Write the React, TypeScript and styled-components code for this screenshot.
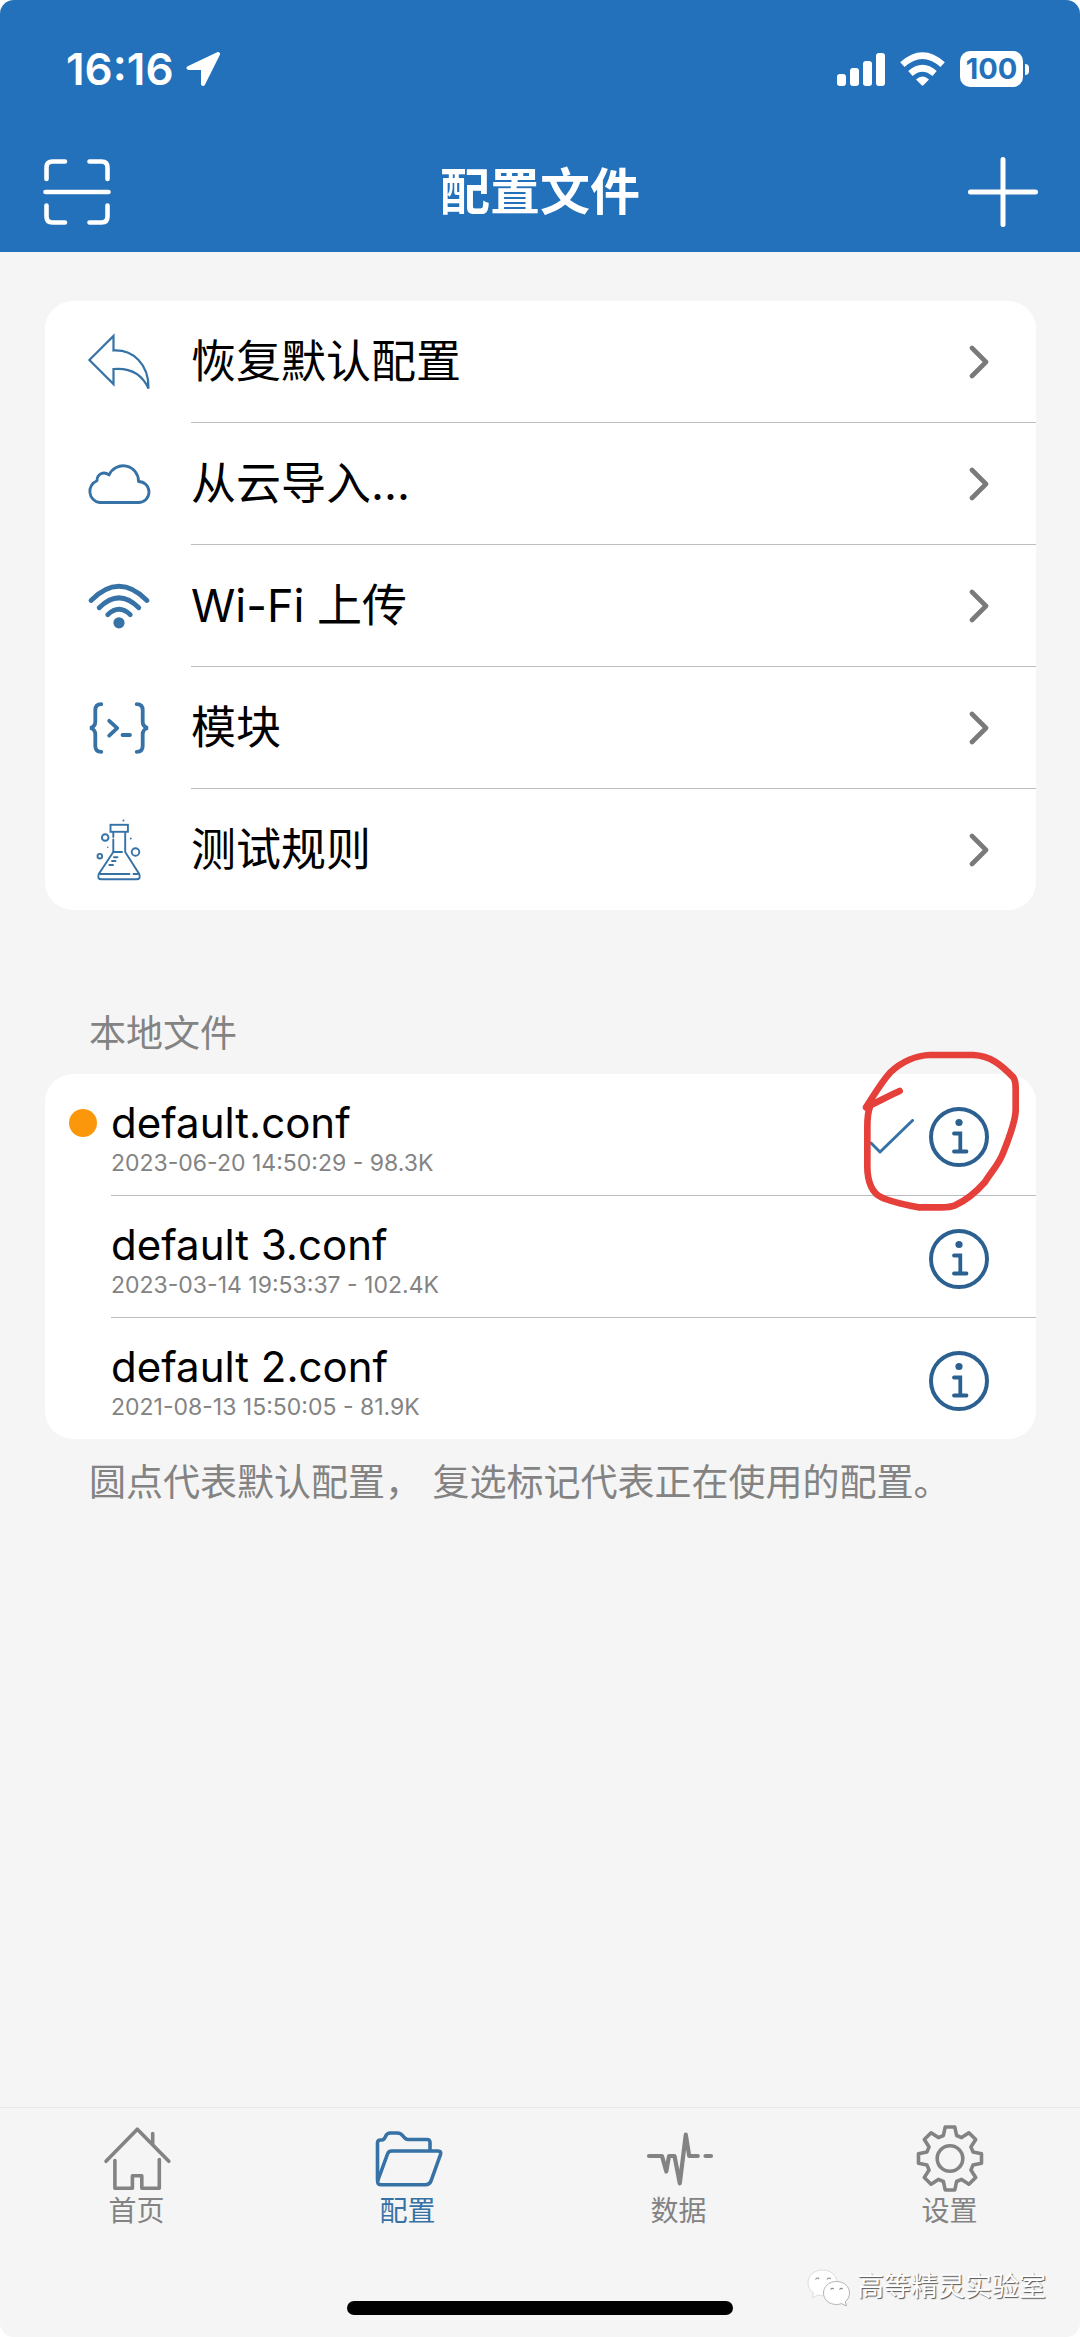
import React from "react";
import styled, { createGlobalStyle } from "styled-components";

const color = {
  brand: "#2371bb",
  icon: "#3672a6",
  info: "#2b6090",
  page: "#f5f5f5",
  card: "#ffffff",
  line: "#bbbdbf",
  muted: "#838383",
  chevron: "#7a7a7a",
  dot: "#fb970b",
  pen: "#e6403b",
};

const GlobalStyle = createGlobalStyle`
  *, *::before, *::after { box-sizing: border-box; }
  body {
    margin: 0;
    background: #ffffff;
    font-family: Inter, "Noto Sans CJK SC", sans-serif;
    color: #000000;
  }
  h1, h2, p, ul { margin: 0; padding: 0; }
  ul { list-style: none; }
  button { font: inherit; color: inherit; background: none; border: 0; padding: 0; cursor: pointer; }
  svg { display: block; flex: none; }
`;

const Screen = styled.div`
  position: relative;
  display: flex;
  flex-direction: column;
  min-height: 100vh;
  background: ${color.page};
  border-radius: 14px;
  overflow: hidden;
`;

const Header = styled.header`
  background: ${color.brand};
  color: #ffffff;
`;

const StatusBar = styled.div`
  display: flex;
  align-items: center;
  justify-content: space-between;
  height: 132px;
  padding: 6px 51px 0 66px;
`;

const StatusGroup = styled.div<{ $gap: number }>`
  display: flex;
  align-items: center;
  gap: ${(p) => p.$gap}px;
`;

const Clock = styled.time`
  font-size: 44px;
  line-height: 52px;
  font-weight: 600;
`;

const Battery = styled.div`
  display: flex;
  align-items: center;
  gap: 2px;
`;

const BatteryBody = styled.span`
  display: grid;
  place-items: center;
  width: 63px;
  height: 36px;
  border-radius: 10px;
  background: #ffffff;
  color: ${color.brand};
  font-size: 29px;
  line-height: 36px;
  font-weight: 700;
`;

const BatteryTip = styled.span`
  width: 4px;
  height: 11px;
  border-radius: 0 5px 5px 0;
  background: #ffffff;
`;

const TitleBar = styled.div`
  display: grid;
  grid-template-columns: 72px 1fr 72px;
  align-items: center;
  height: 120px;
  padding: 0 41px;
`;

const Title = styled.h1`
  font-size: 50px;
  line-height: 60px;
  font-weight: 600;
  text-align: center;
`;

const Content = styled.main`
  flex: 1;
  padding: 49px 44px 48px 45px;
`;

const Card = styled.ul`
  position: relative;
  background: ${color.card};
  border-radius: 28px;
`;

const Divider = styled.li<{ $inset: number }>`
  height: 1px;
  margin-left: ${(p) => p.$inset}px;
  background: ${color.line};
`;

const MenuButton = styled.button`
  display: flex;
  align-items: center;
  width: 100%;
  height: 121px;
  padding: 0 47px 0 42px;
  text-align: left;
`;

const MenuLabel = styled.span`
  flex: 1;
  margin-left: 40px;
  font-size: 45px;
  line-height: 56px;
`;

const SectionTitle = styled.h2`
  margin: 100px 0 16px 44px;
  color: ${color.muted};
  font-size: 37px;
  line-height: 48px;
  font-weight: 400;
`;

const SectionNote = styled.p`
  margin: 20px 0 0 44px;
  color: ${color.muted};
  font-size: 37px;
  line-height: 48px;
`;

const FileRow = styled.li`
  display: flex;
  align-items: center;
  gap: 15px;
  height: 121px;
  padding: 4px 47px 0 24px;
`;

const FileText = styled.div`
  flex: 1;
  display: grid;
  grid-template-columns: 28px 1fr;
  grid-template-rows: 52px 28px;
  column-gap: 14px;
  align-items: center;
`;

const DefaultDot = styled.span<{ $on: boolean }>`
  width: 28px;
  height: 28px;
  border-radius: 50%;
  background: ${(p) => (p.$on ? color.dot : "transparent")};
`;

const FileName = styled.span`
  font-size: 42px;
  line-height: 52px;
`;

const FileMeta = styled.span`
  grid-column: 2;
  color: ${color.muted};
  font-size: 23px;
  line-height: 28px;
`;

const PenMark = styled.svg`
  position: absolute;
  top: -34px;
  right: 11px;
  pointer-events: none;
`;

const Footer = styled.footer`
  border-top: 1px solid #e9e9e9;
`;

const Tabs = styled.nav`
  display: grid;
  grid-template-columns: repeat(4, 1fr);
  gap: 16px;
  padding: 14px 3px 0 9px;
`;

const Tab = styled.button<{ $active: boolean }>`
  display: flex;
  flex-direction: column;
  align-items: center;
  color: ${(p) => (p.$active ? color.icon : color.muted)};
  font-size: 28px;
  line-height: 34px;
`;

const HomeIndicator = styled.div`
  width: 386px;
  height: 14px;
  margin: 73px auto 22px;
  border-radius: 7px;
  background: #000000;
`;

const Watermark = styled.div`
  position: absolute;
  right: 34px;
  bottom: 29px;
  display: flex;
  align-items: center;
  gap: 4px;
  color: #ffffff;
  font-size: 27px;
  line-height: 36px;
  text-shadow: 1px 1px 1px #555555;
`;

/* ---------- status and title icons ---------- */

const LocationIcon = () => (
  <svg width="34" height="34" viewBox="0 0 34 34" fill="#fff" stroke="#fff" strokeWidth="4" strokeLinejoin="round">
    <path d="M32 2 L2.5 16 H17 V32 Z" />
  </svg>
);

const SignalIcon = () => (
  <svg width="48" height="33" viewBox="0 0 48 33" fill="#fff">
    <rect x="0" y="21" width="9" height="12" rx="3" />
    <rect x="13" y="15" width="9" height="18" rx="3" />
    <rect x="26" y="8" width="9" height="25" rx="3" />
    <rect x="39" y="0" width="9" height="33" rx="3" />
  </svg>
);

const StatusWifiIcon = () => (
  <svg width="45" height="34" viewBox="0 0 45 34" fill="none" stroke="#fff" strokeWidth="6.6">
    <path d="M2.4 12.6 Q22.5 -5.4 42.6 12.6" />
    <path d="M10.4 21.4 Q22.5 11 34.6 21.4" />
    <path d="M16 27.4 Q22.5 21.4 29 27.4 L23.6 33 Q22.5 34 21.4 33 Z" fill="#fff" stroke="none" />
  </svg>
);

const ScanIcon = () => (
  <svg width="72" height="72" viewBox="0 0 72 72" fill="none" stroke="#fff" strokeWidth="4.6" strokeLinecap="round">
    <path d="M5.5 23 V11.5 Q5.5 5.5 11.5 5.5 H24" />
    <path d="M48.5 5.5 H60.5 Q66.5 5.5 66.5 11.5 V23" />
    <path d="M5.5 49.5 V60.5 Q5.5 66.5 11.5 66.5 H24" />
    <path d="M48.5 66.5 H60.5 Q66.5 66.5 66.5 60.5 V49.5" />
    <path d="M4.5 36 H67.5" />
  </svg>
);

const PlusIcon = () => (
  <svg width="72" height="72" viewBox="0 0 72 72" fill="none" stroke="#fff" strokeWidth="5" strokeLinecap="round">
    <path d="M36 3.5 V68.5 M3.5 36 H68.5" />
  </svg>
);

/* ---------- menu icons ---------- */

const MenuSvg = ({ width, children }: { width: number; children: React.ReactNode }) => (
  <svg
    width="64"
    height="64"
    viewBox="0 0 64 64"
    fill="none"
    stroke={color.icon}
    strokeWidth={width}
    strokeLinecap="round"
  >
    {children}
  </svg>
);

const RestoreIcon = () => (
  <MenuSvg width={2.2}>
    <path
      strokeLinejoin="miter"
      d="M2.4 30 L26.5 6 V20.5 C46 19.5 62 34 61.5 58.5 C55 44 44 37.5 26.5 39 V54 Z"
    />
  </MenuSvg>
);

const CloudIcon = () => (
  <MenuSvg width={2.8}>
    <path
      strokeLinejoin="round"
      d="M12.5 50.5 A11.3 11.3 0 0 1 10 28.8 C10 22.5 16.5 18.5 22 23 A15.4 15.4 0 0 1 51.5 29.5 A10.5 10.5 0 0 1 51.5 50.5 Z"
    />
  </MenuSvg>
);

const WifiIcon = () => (
  <MenuSvg width={4.8}>
    <path d="M4 26.5 Q32 -2 60 26.5" />
    <path d="M12.2 33.8 Q32 14 51.8 33.8" />
    <path d="M20.7 40.7 Q32 30 43.3 40.7" />
    <circle cx="32" cy="48.8" r="5.6" fill={color.icon} stroke="none" />
  </MenuSvg>
);

const ModuleIcon = () => (
  <MenuSvg width={3.8}>
    <path d="M14.3 8.2 C10 8.2 8.3 10 8.3 14 V25.5 C8.3 29.5 6.5 31.2 3.2 32 C6.5 32.8 8.3 34.5 8.3 38.5 V50 C8.3 54 10 55.8 14.3 55.8" />
    <path d="M49.7 8.2 C54 8.2 55.7 10 55.7 14 V25.5 C55.7 29.5 57.5 31.2 60.8 32 C57.5 32.8 55.7 34.5 55.7 38.5 V50 C55.7 54 54 55.8 49.7 55.8" />
    <path d="M22.2 24.8 L30.2 32.2 L22.2 39.6" strokeLinejoin="round" />
    <path d="M35.5 39 H43" />
  </MenuSvg>
);

const FlaskIcon = () => (
  <MenuSvg width={1.9}>
    <rect x="23.5" y="6.8" width="17.4" height="7" />
    <path d="M26.3 14 V19 M26.3 21.5 V34 L11.8 56 Q9.8 61.3 14.5 61.3 H49.5 Q54.2 61.3 52.2 56 L38.2 34 V14" />
    <path d="M26.3 34 H35" />
    <path d="M13 56 H42.5 M46.5 56 H51" />
    <path d="M27 39.2 H30.5 M25 43 H28.5 M22.3 47 H26" />
    <circle cx="18.2" cy="19.5" r="3.3" />
    <circle cx="48.5" cy="34" r="3.8" />
    <circle cx="12.8" cy="38.2" r="2.3" />
    <g fill={color.icon} stroke="none">
      <circle cx="36.5" cy="2.4" r="1" />
      <circle cx="43.8" cy="20.5" r="0.9" />
      <circle cx="20.8" cy="29.3" r="0.8" />
    </g>
  </MenuSvg>
);

const ChevronIcon = () => (
  <svg
    width="20"
    height="34"
    viewBox="0 0 20 34"
    fill="none"
    stroke={color.chevron}
    strokeWidth="4.6"
    strokeLinecap="round"
    strokeLinejoin="round"
  >
    <path d="M3 3 L17 17 L3 31" />
  </svg>
);

/* ---------- file list icons ---------- */

const InfoIcon = () => (
  <svg width="60" height="60" viewBox="0 0 60 60" fill="none" stroke={color.info} strokeLinecap="round">
    <circle cx="30" cy="30" r="28" strokeWidth="4" />
    <circle cx="30" cy="15.5" r="3.6" fill={color.info} stroke="none" />
    <path d="M25 26.5 H31.3 V44.5 M25 44.5 H37.5" strokeWidth="3.8" />
  </svg>
);

const CheckIcon = () => (
  <svg
    width="44"
    height="36"
    viewBox="0 0 44 36"
    fill="none"
    stroke={color.icon}
    strokeWidth="3"
    strokeLinecap="round"
    strokeLinejoin="round"
  >
    <path d="M1 24 L10 33 L42.5 1.5" />
  </svg>
);

/* ---------- tab icons ---------- */

const TabSvg = ({ children }: { children: React.ReactNode }) => (
  <svg
    width="72"
    height="72"
    viewBox="0 0 72 72"
    fill="none"
    stroke="currentColor"
    strokeWidth="3.6"
    strokeLinecap="round"
    strokeLinejoin="round"
  >
    {children}
  </svg>
);

const HouseIcon = () => (
  <TabSvg>
    <path d="M5 39.3 L36.3 7.2 L67.8 39.3" />
    <path d="M51.7 11.5 V22" />
    <path d="M13.9 38.5 V66.3 H31.4 V53.7 H40.8 V66.3 H58.3 V37.5" />
  </TabSvg>
);

const FolderIcon = () => (
  <TabSvg>
    <path d="M5.5 58.5 V21 Q5.5 18 8.5 18 H10 Q12.5 17.5 13.5 14.5 Q15 11 18 11 H25 Q29 11 31 14 Q33.5 17.5 36 17.5 H55 Q58 17.5 58 20.5 V28.5" />
    <path d="M19.5 29 H66 Q69.5 29 68.5 32.5 L59 59 Q57.5 62.7 53.5 62.7 H9 Q4.5 62.7 6 58 L15.5 32 Q16.5 29 19.5 29 Z" />
  </TabSvg>
);

const PulseIcon = () => (
  <TabSvg>
    <path
      strokeWidth="4.2"
      d="M6 34 H19 L23.3 49.5 L26 34 H31.5 L36.8 61.3 L42.8 12.5 L46.2 34 H54.8 M62.5 34 H68"
    />
  </TabSvg>
);

const tooth: [number, number][] = [
  [-6.6, -23],
  [-4.8, -31.5],
  [4.8, -31.5],
  [6.6, -23],
];

const gearPath =
  Array.from({ length: 8 })
    .flatMap((_, k) => {
      const a = (k * Math.PI) / 4;
      return tooth.map(([x, y]) => {
        const px = 36 + x * Math.cos(a) - y * Math.sin(a);
        const py = 36.5 + x * Math.sin(a) + y * Math.cos(a);
        return `${px.toFixed(1)} ${py.toFixed(1)}`;
      });
    })
    .map((pt, i) => `${i === 0 ? "M" : "L"}${pt}`)
    .join(" ") + " Z";

const GearIcon = () => (
  <TabSvg>
    <path d={gearPath} />
    <circle cx="36" cy="36.5" r="12.8" />
  </TabSvg>
);

const ChatBubblesIcon = () => (
  <svg width="48" height="42" viewBox="0 0 48 42" fill="#fff" stroke="#b4b4b4" strokeWidth="1">
    <path
      d="M17.5 4 C9 4 3 9.7 3 17 C3 21 5 24.5 8.5 27 L7.5 32 L13 29 C14.5 29.5 16 29.7 17.5 29.7 C26 29.7 32 24 32 17 C32 9.7 26 4 17.5 4 Z"
      stroke="#dcdcdc"
    />
    <path d="M31.5 15.5 C24 15.5 18.5 20.5 18.5 27 C18.5 33.5 24 38.5 31.5 38.5 C33.2 38.5 35 38.2 36.5 37.6 L41.5 40 L40.3 35.7 C43 33.6 44.5 30.5 44.5 27 C44.5 20.5 39 15.5 31.5 15.5 Z" />
    <g fill="none" stroke="#8a8a8a" strokeWidth="1.2">
      <path d="M10.5 13.5 Q12.3 10.8 14.2 13 M22 13.5 Q23.8 10.8 25.7 13" />
      <path d="M25.5 23.5 Q27 21.5 28.7 23 M34.5 23.5 Q36 21.5 37.7 23" />
    </g>
  </svg>
);

/* ---------- data ---------- */

const menu = [
  { label: "恢复默认配置", Icon: RestoreIcon },
  { label: "从云导入...", Icon: CloudIcon },
  { label: "Wi-Fi 上传", Icon: WifiIcon },
  { label: "模块", Icon: ModuleIcon },
  { label: "测试规则", Icon: FlaskIcon },
];

const files = [
  { name: "default.conf", meta: "2023-06-20 14:50:29 - 98.3K", isDefault: true, inUse: true },
  { name: "default 3.conf", meta: "2023-03-14 19:53:37 - 102.4K", isDefault: false, inUse: false },
  { name: "default 2.conf", meta: "2021-08-13 15:50:05 - 81.9K", isDefault: false, inUse: false },
];

const tabs = [
  { label: "首页", Icon: HouseIcon, active: false },
  { label: "配置", Icon: FolderIcon, active: true },
  { label: "数据", Icon: PulseIcon, active: false },
  { label: "设置", Icon: GearIcon, active: false },
];

export default function App() {
  return (
    <>
      <GlobalStyle />
      <Screen lang="zh-CN">
        <Header>
          <StatusBar>
            <StatusGroup $gap={12}>
              <Clock>16:16</Clock>
              <LocationIcon />
            </StatusGroup>
            <StatusGroup $gap={15}>
              <SignalIcon />
              <StatusWifiIcon />
              <Battery>
                <BatteryBody>100</BatteryBody>
                <BatteryTip />
              </Battery>
            </StatusGroup>
          </StatusBar>
          <TitleBar>
            <button type="button" aria-label="扫描">
              <ScanIcon />
            </button>
            <Title>配置文件</Title>
            <button type="button" aria-label="添加">
              <PlusIcon />
            </button>
          </TitleBar>
        </Header>

        <Content>
          <Card>
            {menu.map(({ label, Icon }, i) => (
              <React.Fragment key={label}>
                {i > 0 && <Divider role="separator" $inset={146} />}
                <li>
                  <MenuButton type="button">
                    <Icon />
                    <MenuLabel>{label}</MenuLabel>
                    <ChevronIcon />
                  </MenuButton>
                </li>
              </React.Fragment>
            ))}
          </Card>

          <SectionTitle>本地文件</SectionTitle>
          <Card>
            {files.map((file, i) => (
              <React.Fragment key={file.name}>
                {i > 0 && <Divider role="separator" $inset={66} />}
                <FileRow>
                  <FileText>
                    <DefaultDot $on={file.isDefault} />
                    <FileName>{file.name}</FileName>
                    <FileMeta>{file.meta}</FileMeta>
                  </FileText>
                  {file.inUse && <CheckIcon />}
                  <button type="button" aria-label={`${file.name} 详情`}>
                    <InfoIcon />
                  </button>
                </FileRow>
              </React.Fragment>
            ))}
            <PenMark
              width="170"
              height="176"
              viewBox="45 30 510 528"
              fill="none"
              stroke={color.pen}
              strokeWidth="20"
              strokeLinecap="round"
              strokeLinejoin="round"
              aria-hidden="true"
            >
              <path d="M179 183 C145 198 110 218 78 232 C105 190 125 155 150 128 C185 95 230 76 270 75 H400 C450 78 480 100 520 142 C528 155 527 165 527 180 V240 C527 275 505 330 488 372 C475 405 450 430 435 456 C405 490 370 515 345 526 C330 532 320 532 305 532 H235 C200 525 150 515 125 502 C100 492 80 460 82 400 V290 C82 265 82 250 90 230" />
            </PenMark>
          </Card>
          <SectionNote>圆点代表默认配置， 复选标记代表正在使用的配置。</SectionNote>
        </Content>

        <Footer>
          <Tabs>
            {tabs.map(({ label, Icon, active }) => (
              <Tab key={label} type="button" $active={active} aria-current={active ? "page" : undefined}>
                <Icon />
                {label}
              </Tab>
            ))}
          </Tabs>
          <HomeIndicator />
        </Footer>

        <Watermark>
          <ChatBubblesIcon />
          高等精灵实验室
        </Watermark>
      </Screen>
    </>
  );
}
